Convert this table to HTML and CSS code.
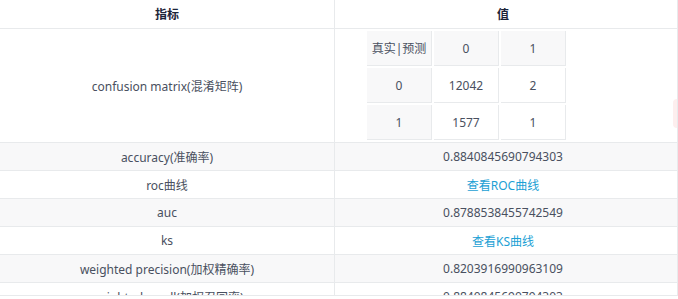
FILE: index.html
```html
<!DOCTYPE html>
<html>
  <head>
    <title>模型评估指标</title>
    <link rel="stylesheet" href="styles.css">
  </head>
  <body>
    <div class="table-wrap">
      <table class="metrics">
        <thead>
          <tr>
            <th class="col-name">指标</th>
            <th class="col-value">值</th>
          </tr>
        </thead>
        <tbody>
          <tr class="matrix-row">
            <td>confusion matrix(混淆矩阵)</td>
            <td class="matrix-cell">
              <!-- confusion matrix -->
              <table class="matrix">
                <tr>
                  <td class="head">真实|预测</td>
                  <td class="head">0</td>
                  <td class="head">1</td>
                </tr>
                <tr>
                  <td class="head">0</td>
                  <td>12042</td>
                  <td>2</td>
                </tr>
                <tr>
                  <td class="head">1</td>
                  <td>1577</td>
                  <td>1</td>
                </tr>
              </table>
            </td>
          </tr>
          <tr class="striped">
            <td>accuracy(准确率)</td>
            <td>0.8840845690794303</td>
          </tr>
          <tr>
            <td>roc曲线</td>
            <td><a href="#" class="link">查看ROC曲线</a></td>
          </tr>
          <tr class="striped">
            <td>auc</td>
            <td>0.8788538455742549</td>
          </tr>
          <tr>
            <td>ks</td>
            <td><a href="#" class="link">查看KS曲线</a></td>
          </tr>
          <tr class="striped">
            <td>weighted precision(加权精确率)</td>
            <td>0.8203916990963109</td>
          </tr>
          <tr>
            <td>weighted recall(加权召回率)</td>
            <td>0.8840845690794303</td>
          </tr>
        </tbody>
      </table>
      <div class="side-tab"></div>
    </div>
  </body>
</html>
```

FILE: styles.css
```css
body {
  margin: 0px;
  font-family: "Noto Sans", "Noto Sans CJK SC", sans-serif;
  font-size: 12px;
  color: #495060;
}

.table-wrap {
  position: relative;
  width: 677px;
  height: 295px;
  overflow: hidden;
  border-right: 1px solid #e8eaec;
  border-bottom: 1px solid #e8eaec;
}

.metrics {
  width: 100%;
  border-collapse: collapse;
  table-layout: fixed;
}

.metrics th,
.metrics td {
  text-align: center;
  padding: 0;
  height: 27px;
  border-bottom: 1px solid #e8eaec;
}

.metrics th {
  font-weight: 700;
  font-size: 12px;
  color: #1c2438;
  height: 28px;
}

.col-name {
  width: 334px;
  border-right: 1px solid #e8eaec;
}

.metrics > tbody > tr > td:first-child {
  border-right: 1px solid #e8eaec;
}

.metrics th.col-value,
.metrics > tbody > tr > td:last-child {
  padding-right: 6px;
}

.striped td {
  background-color: #f8f8f9;
}

.link {
  color: #1ba0d4;
  text-decoration: none;
}

.matrix-row > td {
  height: 112px;
}

.metrics td.matrix-cell {
  text-align: left;
  vertical-align: top;
}

.matrix {
  border-collapse: separate;
  border-spacing: 2px;
  margin-left: 30px;
}

.metrics .matrix td {
  width: 64px;
  height: 34px;
  padding: 0;
  border-bottom: 1px solid #e8eaec;
  border-right: 1px solid #e8eaec;
  background-color: #fff;
}

.metrics .matrix td.head {
  background-color: #f8f8f9;
}

.side-tab {
  position: absolute;
  right: 0px;
  top: 99px;
  width: 4px;
  height: 29px;
  background-color: #fdeeee;
  border-radius: 4px 0 0 4px;
}
```
